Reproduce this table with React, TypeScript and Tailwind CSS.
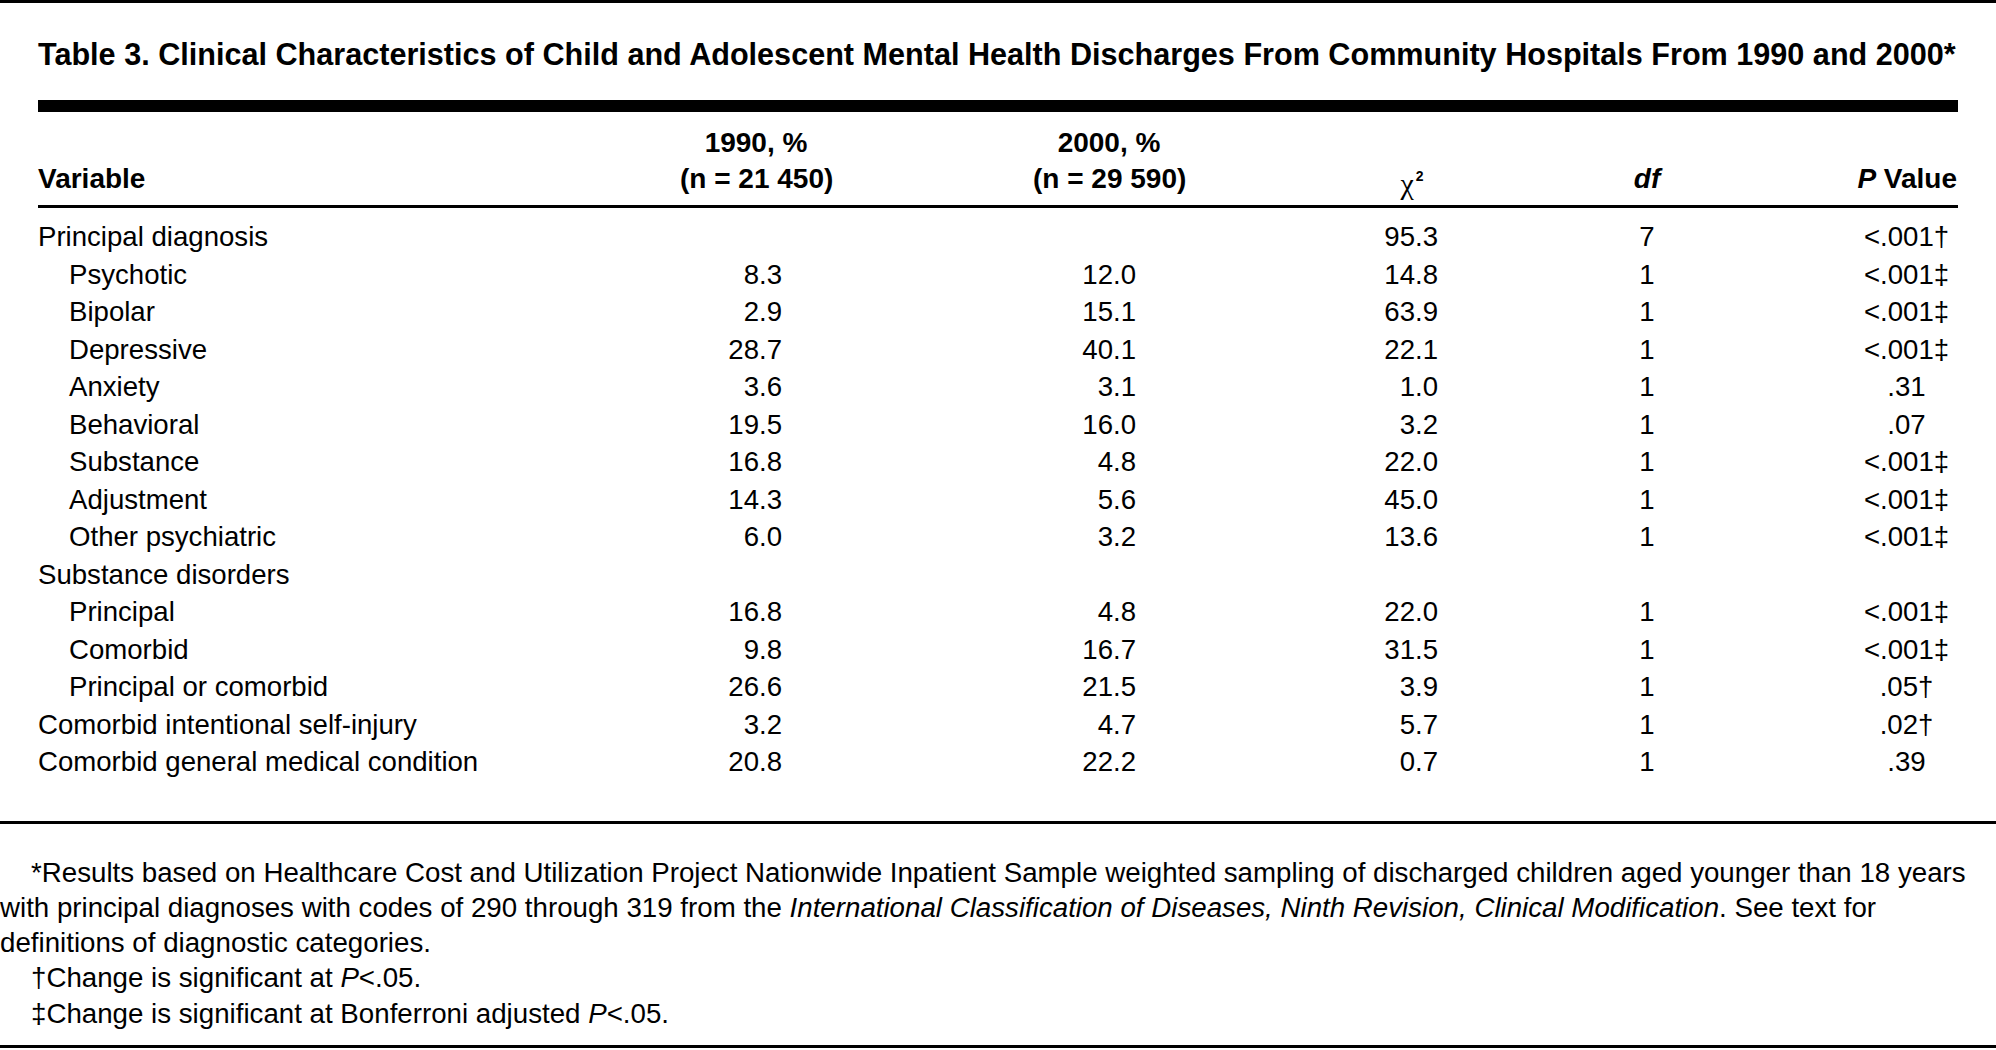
type Row = {
  label: string;
  sub?: boolean;
  a?: string;
  b?: string;
  chi?: string;
  df?: string;
  p?: string;
};

const rows: Row[] = [
  { label: "Principal diagnosis", chi: "95.3", df: "7", p: "<.001†" },
  { label: "Psychotic", sub: true, a: "8.3", b: "12.0", chi: "14.8", df: "1", p: "<.001‡" },
  { label: "Bipolar", sub: true, a: "2.9", b: "15.1", chi: "63.9", df: "1", p: "<.001‡" },
  { label: "Depressive", sub: true, a: "28.7", b: "40.1", chi: "22.1", df: "1", p: "<.001‡" },
  { label: "Anxiety", sub: true, a: "3.6", b: "3.1", chi: "1.0", df: "1", p: ".31" },
  { label: "Behavioral", sub: true, a: "19.5", b: "16.0", chi: "3.2", df: "1", p: ".07" },
  { label: "Substance", sub: true, a: "16.8", b: "4.8", chi: "22.0", df: "1", p: "<.001‡" },
  { label: "Adjustment", sub: true, a: "14.3", b: "5.6", chi: "45.0", df: "1", p: "<.001‡" },
  { label: "Other psychiatric", sub: true, a: "6.0", b: "3.2", chi: "13.6", df: "1", p: "<.001‡" },
  { label: "Substance disorders" },
  { label: "Principal", sub: true, a: "16.8", b: "4.8", chi: "22.0", df: "1", p: "<.001‡" },
  { label: "Comorbid", sub: true, a: "9.8", b: "16.7", chi: "31.5", df: "1", p: "<.001‡" },
  { label: "Principal or comorbid", sub: true, a: "26.6", b: "21.5", chi: "3.9", df: "1", p: ".05†" },
  { label: "Comorbid intentional self-injury", a: "3.2", b: "4.7", chi: "5.7", df: "1", p: ".02†" },
  { label: "Comorbid general medical condition", a: "20.8", b: "22.2", chi: "0.7", df: "1", p: ".39" },
];

// column tracks (x measured from the table's left edge at 38px)
const LABEL = "w-[642px] shrink-0";
const C1990 = "w-[152px] shrink-0";
const C2000 = "ml-[201px] w-[152px] shrink-0";
const CCHI = "ml-[191px] w-[72px] shrink-0";
const CDF = "ml-[149px] w-[100px] shrink-0";
const CP = "ml-[159px] w-[101px] shrink-0";

function DataRow({ row }: { row: Row }) {
  return (
    <div className="flex h-[37.5px] items-start leading-[37.5px] whitespace-nowrap">
      <div className={`${LABEL} ${row.sub ? "pl-[31px]" : "pl-0"}`}>{row.label}</div>
      <div className={`${C1990} pr-[50px] text-right`}>{row.a}</div>
      <div className={`${C2000} pr-[49px] text-right`}>{row.b}</div>
      <div className={`${CCHI} pr-[10px] text-right`}>{row.chi}</div>
      <div className={`${CDF} text-center`}>{row.df}</div>
      <div className={`${CP} text-center`}>{row.p}</div>
    </div>
  );
}

export default function App() {
  return (
    <main className="h-[1050px] w-[1996px] overflow-hidden bg-white font-['Liberation_Sans',Arial,sans-serif] text-black">
      <div className="h-[3px] bg-black" />

      <div className="px-[38px]">
        <h1 className="pt-[31px] text-[30.6px] font-bold leading-[40px] whitespace-nowrap">
          Table 3. Clinical Characteristics of Child and Adolescent Mental Health Discharges From Community
          Hospitals From 1990 and 2000*
        </h1>
        <div className="mt-[26px] h-[12px] bg-black" />

        <div className="flex items-end pt-[13px] pb-[8px] text-[28px] font-bold leading-[36px] whitespace-nowrap">
          <div className={LABEL}>Variable</div>
          <div className={`${C1990} text-center`}>
            <div>1990, %</div>
            <div>(n = 21 450)</div>
          </div>
          <div className={`${C2000} text-center`}>
            <div>2000, %</div>
            <div>(n = 29 590)</div>
          </div>
          <div className={`${CCHI} text-center`}>
            <span className="relative top-[6px] font-['Liberation_Serif',serif] text-[30px] font-normal">χ</span>
            <sup className="ml-[2px] text-[14px]">2</sup>
          </div>
          <div className={`${CDF} text-center italic`}>df</div>
          <div className={`${CP} text-right`}>
            <span className="italic">P</span> Value
          </div>
        </div>
        <div className="h-[3px] bg-black" />

        <div className="pt-[10px] pb-[40px] text-[27.6px]">
          {rows.map((r, i) => (
            <DataRow key={i} row={r} />
          ))}
        </div>
      </div>

      <div className="h-[3px] bg-black" />

      <div className="pt-[31px] text-[27.7px] leading-[35.3px] whitespace-nowrap">
        <p className="pl-[31px]">
          *Results based on Healthcare Cost and Utilization Project Nationwide Inpatient Sample weighted sampling of
          discharged children aged younger than 18 years
        </p>
        <p>
          with principal diagnoses with codes of 290 through 319 from the{" "}
          <i>International Classification of Diseases, Ninth Revision, Clinical Modification</i>. See text for
        </p>
        <p>definitions of diagnostic categories.</p>
        <p className="pl-[31px]">
          †Change is significant at <i>P</i>&lt;.05.
        </p>
        <p className="pl-[31px]">
          ‡Change is significant at Bonferroni adjusted <i>P</i>&lt;.05.
        </p>
      </div>

      <div className="mt-[14px] h-[3px] bg-black" />
    </main>
  );
}
